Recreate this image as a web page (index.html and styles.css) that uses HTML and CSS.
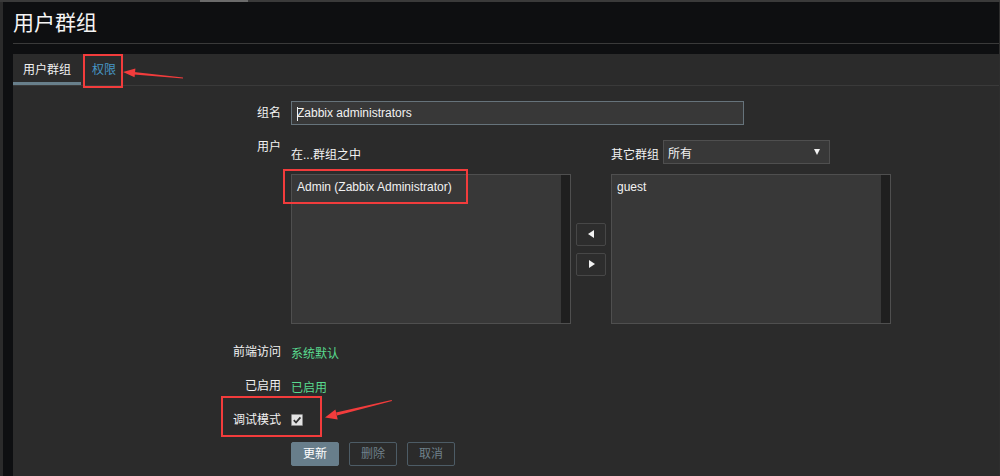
FILE: index.html
```html
<!DOCTYPE html>
<html lang="zh-CN">
<head>
<meta charset="utf-8">
<title>用户群组</title>
<link rel="stylesheet" href="styles.css">
</head>
<body>
<div class="topbar"><div class="topbar-seg"></div></div>
<div class="page">
  <header class="header"><h1 class="title">用户群组</h1></header>
  <main class="panel">
    <nav class="tabs">
      <span class="tab tab-active">用户群组</span>
      <span class="tab tab-link">权限</span>
    </nav>
    <form class="form">
      <div class="row row-name">
        <div class="row-label">组名</div>
        <div class="row-field">
          <div class="input input-focus"><span class="caret"></span>Zabbix administrators</div>
        </div>
      </div>
      <div class="row row-users">
        <div class="row-label row-label-top">用户</div>
        <div class="row-field users">
          <div class="users-col">
            <div class="users-head">在...群组之中</div>
            <div class="listbox">
              <div class="listbox-items"><div class="listbox-item">Admin (Zabbix Administrator)</div></div>
              <div class="listbox-scroll"></div>
            </div>
          </div>
          <div class="users-move">
            <span class="move-btn"><span class="tri tri-left"></span></span>
            <span class="move-btn"><span class="tri tri-right"></span></span>
          </div>
          <div class="users-col">
            <div class="users-head">其它群组
              <div class="select"><span>所有</span><span class="tri tri-down"></span></div>
            </div>
            <div class="listbox">
              <div class="listbox-items"><div class="listbox-item">guest</div></div>
              <div class="listbox-scroll"></div>
            </div>
          </div>
        </div>
      </div>
      <div class="row">
        <div class="row-label">前端访问</div>
        <div class="row-field"><span class="green">系统默认</span></div>
      </div>
      <div class="row">
        <div class="row-label">已启用</div>
        <div class="row-field"><span class="green">已启用</span></div>
      </div>
      <div class="row">
        <div class="row-label">调试模式</div>
        <div class="row-field">
          <span class="checkbox"><svg width="10" height="10" viewBox="0 0 10 10"><path d="M1.8 5.2 L4 7.5 L8.4 2.3" fill="none" stroke="#333" stroke-width="1.8"/></svg></span>
        </div>
      </div>
      <div class="row">
        <div class="row-label"></div>
        <div class="row-field buttons">
          <span class="btn btn-primary">更新</span>
          <span class="btn btn-alt">删除</span>
          <span class="btn btn-alt">取消</span>
        </div>
      </div>
    </form>
  </main>
</div>
<svg class="annot" width="1000" height="476" viewBox="0 0 1000 476">
  <g fill="none" stroke="#f23c3c" stroke-width="2">
    <rect x="84" y="55" width="38" height="32"/>
    <rect x="284" y="170" width="183" height="33"/>
    <rect x="222" y="397" width="99" height="39"/>
  </g>
  <g fill="#f23c3c">
    <polygon points="123,72 134.6,77.3 135.4,68.6"/>
    <polygon points="134,72 183,77.4 183,78.4 134,74.6"/>
    <polygon points="325,417.5 337.7,419.6 335.4,409.4"/>
    <polygon points="336,412.6 391.6,400 392,401 337,415.4"/>
  </g>
</svg>
</body>
</html>
```
FILE: styles.css
```css
body {
  margin: 0;
  background: #0e0f11;
  font-family: "Liberation Sans", "Noto Sans CJK SC", sans-serif;
  font-size: 12px;
  color: #f2f2f2;
  height: 476px;
  overflow: hidden;
  position: relative;
}

.topbar {
  height: 2px;
  background: #3a3a3a;
  display: flex;
}

.topbar-seg {
  width: 48px;
  margin-left: 200px;
  background: #6b6b6b;
}

.page {
  border-left: 3px solid #2b2b2b;
  border-right: 1px solid #2e2e2e;
  padding-left: 10px;
  height: 474px;
  box-sizing: border-box;
  display: flex;
  flex-direction: column;
}

.header {
  height: 41px;
  flex-shrink: 0;
  border-bottom: 1px solid #3a3a3a;
  display: flex;
  align-items: center;
}

.title {
  margin: 0;
  font-size: 21px;
  font-weight: normal;
  line-height: 24px;
  color: #f4f4f4;
}

.panel {
  margin-top: 10px;
  background: #2b2b2b;
  flex: 1;
  min-height: 0;
  overflow: hidden;
}

.tabs {
  display: flex;
  height: 31px;
  border-bottom: 1px solid #3a3a3a;
}

.tab {
  padding: 3px 10px 0;
  line-height: 26px;
  border-bottom: 3px solid transparent;
}

.tab-active {
  border-bottom-color: #687f8b;
  color: #f2f2f2;
}

.tab-link {
  color: #4796c4;
  padding-left: 11px;
}

.form {
  padding-top: 15px;
}

.row {
  display: grid;
  grid-template-columns: 268px 1fr;
  column-gap: 10px;
  margin-bottom: 10px;
}

.row-name {
  margin-bottom: 15px;
}

.row-users {
  margin-bottom: 16px;
}

.row-label {
  text-align: right;
  line-height: 23px;
  height: 24px;
  padding-top: 1px;
  box-sizing: border-box;
}

.row-label-top {
  line-height: 14px;
  padding-top: 0;
}

.row-field {
  display: flex;
  align-items: center;
  min-height: 24px;
}

.input {
  width: 453px;
  height: 24px;
  box-sizing: border-box;
  background: #383838;
  border: 1px solid #66737b;
  padding: 1px 5px 0;
  line-height: 21px;
  color: #f2f2f2;
  display: flex;
  align-items: center;
}

.caret {
  width: 1px;
  height: 14px;
  background: #f2f2f2;
  margin-right: -1px;
}

.users {
  align-items: flex-start;
  gap: 5px;
}

.users-col {
  display: flex;
  flex-direction: column;
}

.users-head {
  height: 24px;
  margin-bottom: 10px;
  display: flex;
  align-items: center;
  padding-top: 2px;
  box-sizing: border-box;
}

.select {
  width: 167px;
  height: 24px;
  flex-shrink: 0;
  box-sizing: border-box;
  margin-left: 4px;
  margin-top: -2px;
  background: #383838;
  border: 1px solid #4f4f4f;
  padding: 0 9px 0 4px;
  display: flex;
  align-items: center;
  justify-content: space-between;
}

.listbox {
  width: 280px;
  height: 150px;
  box-sizing: border-box;
  background: #383838;
  border: 1px solid #4f4f4f;
  display: flex;
}

.listbox-items {
  flex: 1;
  padding: 5px 5px;
}

.listbox-item {
  line-height: 14px;
}

.listbox-scroll {
  width: 9px;
  background: #1f1f1f;
}

.users-move {
  width: 30px;
  margin-top: 34px;
  height: 150px;
  display: flex;
  flex-direction: column;
  justify-content: center;
  gap: 7px;
}

.move-btn {
  width: 30px;
  height: 23px;
  box-sizing: border-box;
  border: 1px solid #474747;
  border-radius: 2px;
  background: #2d2d2d;
  display: flex;
  align-items: center;
  justify-content: center;
}

.tri {
  width: 0;
  height: 0;
  display: block;
}

.tri-left {
  border-top: 4px solid transparent;
  border-bottom: 4px solid transparent;
  border-right: 6px solid #f2f2f2;
  margin-right: 1px;
}

.tri-right {
  border-top: 4px solid transparent;
  border-bottom: 4px solid transparent;
  border-left: 6px solid #f2f2f2;
  margin-left: 1px;
}

.tri-down {
  border-left: 3.5px solid transparent;
  border-right: 3.5px solid transparent;
  border-top: 6px solid #f2f2f2;
}

.green {
  color: #59db8f;
}

.checkbox {
  width: 12px;
  height: 12px;
  box-sizing: border-box;
  background: #e4e4e4;
  border: 1px solid #8c8c8c;
  border-radius: 1px;
  display: flex;
  align-items: center;
  justify-content: center;
}

.buttons {
  gap: 10px;
}

.btn {
  height: 24px;
  box-sizing: border-box;
  padding: 0 11px;
  border: 1px solid #4d5c66;
  border-radius: 2px;
  line-height: 22px;
  font-size: 12px;
}

.btn-primary {
  background: #687e8b;
  border-color: #687e8b;
  color: #ffffff;
}

.btn-alt {
  background: transparent;
  color: #6f808a;
}

.annot {
  position: absolute;
  top: 0;
  left: 0;
  pointer-events: none;
}
```
